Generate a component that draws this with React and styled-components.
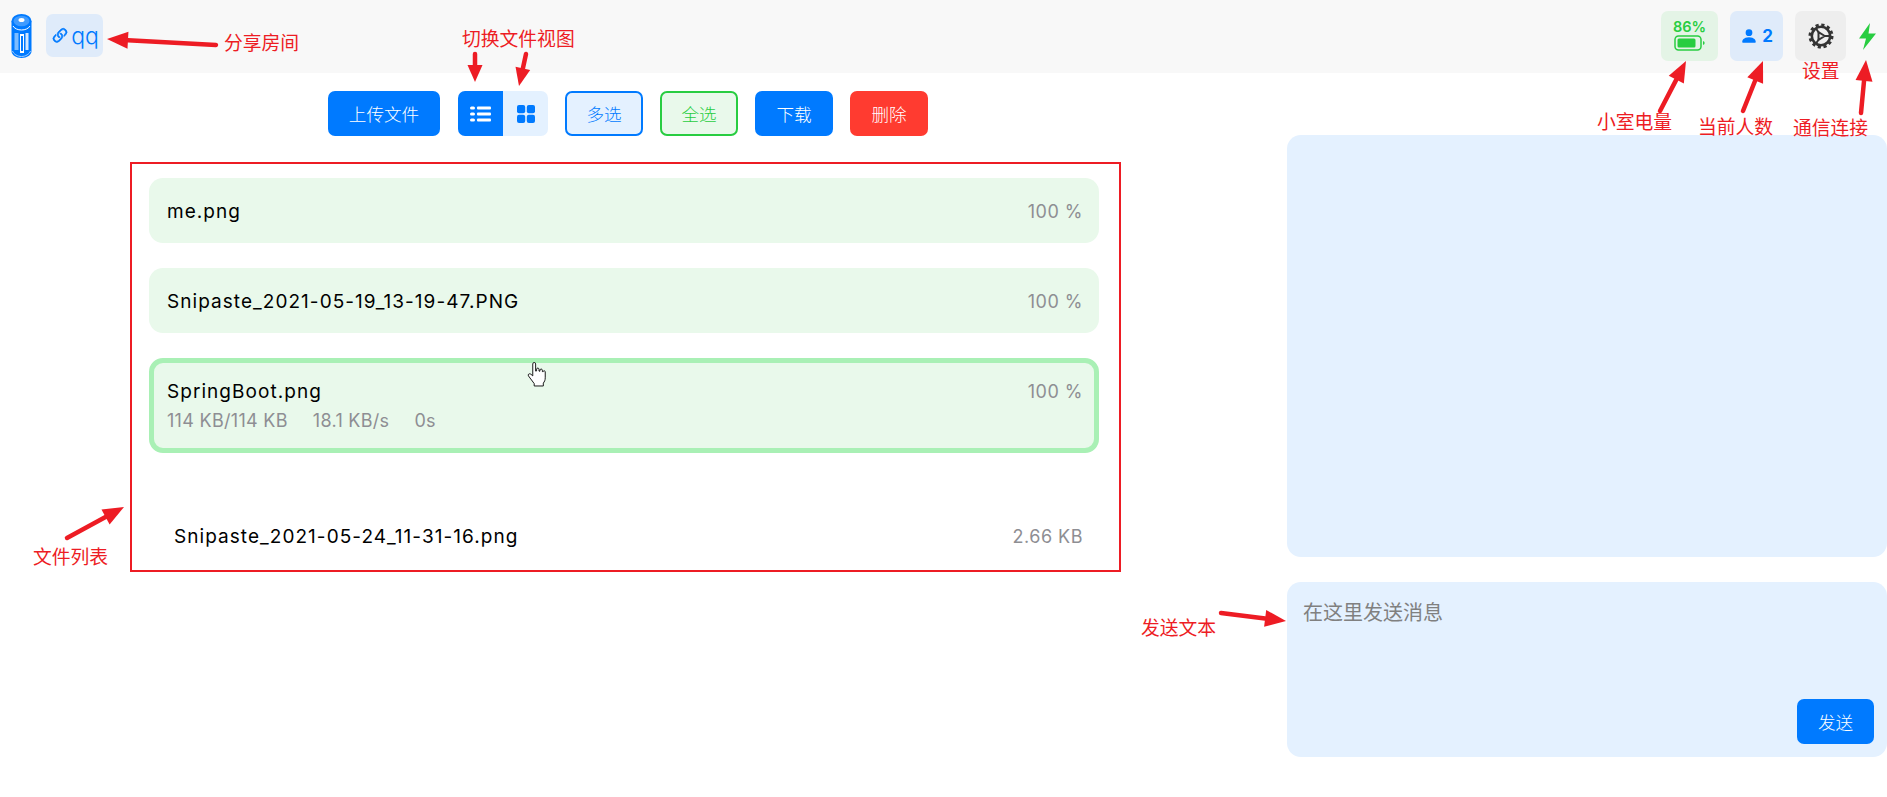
import React from "react";
import styled, { createGlobalStyle } from "styled-components";
import { BsLink45Deg, BsPersonFill } from "react-icons/bs";

const BLUE = "#007aff";
const LIGHT = "#e4f1ff";
const GREEN = "#28cd41";
const PALE_GREEN = "#e9f9eb";
const RED = "#ff3b30";
const GRAY = "#8e8e93";
const INK = "#ed1c24";
const LATIN = `Inter, "Noto Sans CJK SC", sans-serif`;
const CJK = `"Noto Sans CJK SC", "Noto Sans", sans-serif`;

const Global = createGlobalStyle`
  html, body { margin: 0; padding: 0; background: #fff; }
  body { font-family: ${CJK}; overflow: hidden; }
  * { box-sizing: border-box; }
`;

const Page = styled.div`
  position: relative;
  width: 1887px;
  height: 797px;
  overflow: hidden;
`;

const Header = styled.header`
  height: 73px;
  background: #f8f8f8;
  display: flex;
  align-items: flex-start;
  padding: 11px 10px 0 10px;
`;

const Logo = styled.svg`
  width: 23px;
  height: 46px;
  margin-top: 2px;
  flex: none;
`;

const RoomChip = styled.div`
  margin: 3px 0 0 13px;
  width: 57px;
  height: 43px;
  border-radius: 7px;
  background: #dfebfa;
  color: ${BLUE};
  display: flex;
  align-items: center;
  justify-content: center;
  gap: 1px;
  font-family: ${LATIN};
  font-size: 23px;
  font-weight: 300;
  svg { font-size: 20px; stroke: ${BLUE}; stroke-width: 0.5px; }
`;

const HeaderRight = styled.div`
  margin-left: auto;
  display: flex;
  align-items: flex-start;
  gap: 12px;
`;

const Status = styled.div`
  width: ${(p) => p.$w}px;
  height: 50px;
  border-radius: 7px;
  background: ${(p) => p.$bg};
  color: ${(p) => p.$fg};
  display: flex;
  flex-direction: ${(p) => (p.$column ? "column" : "row")};
  align-items: center;
  justify-content: center;
  gap: ${(p) => (p.$column ? 0 : 4)}px;
  padding-bottom: ${(p) => (p.$column ? 3 : 0)}px;
  font-family: ${LATIN};
  font-weight: 600;
`;

const Percent = styled.span`
  font-size: 14.5px;
  line-height: 17px;
`;

const Count = styled.span`
  font-size: 17px;
  font-weight: 700;
`;

const Bolt = styled.svg`
  width: 19px;
  height: 27px;
  margin-top: 12px;
`;

const Main = styled.main`
  display: flex;
  justify-content: space-between;
  align-items: flex-start;
`;

const LeftColumn = styled.section`
  margin-left: 149px;
  width: 950px;
  padding-top: 18px;
`;

const Toolbar = styled.div`
  display: flex;
  margin-left: 179px;
  gap: 17px;
`;

const Button = styled.button`
  height: 45px;
  width: ${(p) => p.$w || 78}px;
  border-radius: 7px;
  border: ${(p) => (p.$outline ? `2px solid ${p.$color}` : "none")};
  background: ${(p) => (p.$outline ? p.$tint : p.$color)};
  color: ${(p) => (p.$outline ? p.$color : "#fff")};
  font-family: ${CJK};
  font-size: 17.6px;
  font-weight: 300;
  padding: 0;
`;

const Toggle = styled.div`
  display: flex;
  width: 90px;
  height: 45px;
  border-radius: 7px;
  overflow: hidden;
  margin-left: 1px;
`;

const ToggleSide = styled.div`
  flex: 1;
  background: ${(p) => (p.$active ? BLUE : LIGHT)};
  display: flex;
  align-items: center;
  justify-content: center;
`;

const FileList = styled.div`
  margin-top: 42px;
  display: flex;
  flex-direction: column;
`;

const FileItem = styled.div`
  background: ${(p) => (p.$plain ? "transparent" : PALE_GREEN)};
  border-radius: 14px;
  border: ${(p) => (p.$active ? "5px solid #a9f0b5" : "none")};
  margin-bottom: ${(p) => p.$after || 0}px;
  height: ${(p) => (p.$active ? 95 : 65)}px;
  padding: ${(p) => (p.$active ? "17px 11px 0 13px" : p.$plain ? "0 16px 0 25px" : "2px 16px 0 18px")};
  display: flex;
  flex-direction: column;
  justify-content: ${(p) => (p.$active ? "flex-start" : "center")};
  font-family: ${LATIN};
`;

const FileRow = styled.div`
  display: flex;
  justify-content: space-between;
  align-items: center;
  height: 22px;
  font-size: 19px;
`;

const FileName = styled.span`
  color: #000;
  letter-spacing: 1.05px;
`;

const FileSize = styled.span`
  color: ${GRAY};
  font-size: 18px;
  letter-spacing: 0.5px;
`;

const Progress = styled.div`
  display: flex;
  gap: 25px;
  margin-top: 8px;
  color: ${GRAY};
  font-size: 18px;
  letter-spacing: 0.3px;
  line-height: 22px;
`;

const RightColumn = styled.aside`
  width: 600px;
  padding-top: 62px;
  display: flex;
  flex-direction: column;
  gap: 25px;
`;

const ChatBox = styled.div`
  height: 422px;
  background: ${LIGHT};
  border-radius: 14px;
`;

const Composer = styled.div`
  position: relative;
  height: 175px;
  background: ${LIGHT};
  border-radius: 14px;
  padding: 16px 13px 13px 16px;
  display: flex;
  flex-direction: column;
  align-items: flex-end;
`;

const MessageInput = styled.textarea`
  flex: 1;
  width: 100%;
  border: none;
  outline: none;
  resize: none;
  background: transparent;
  font-family: ${CJK};
  font-size: 20px;
  line-height: 28px;
  padding: 0;
  &::placeholder { color: #808080; opacity: 1; }
`;

const Overlay = styled.div`
  position: absolute;
  inset: 0;
  pointer-events: none;
`;

const RedFrame = styled.div`
  position: absolute;
  left: 130px;
  top: 162px;
  width: 991px;
  height: 410px;
  border: 2px solid ${INK};
`;

const Note = styled.span`
  position: absolute;
  left: ${(p) => p.$x}px;
  top: ${(p) => p.$y - 14}px;
  font-family: ${CJK};
  font-size: 18.8px;
  line-height: 26px;
  color: ${INK};
  white-space: nowrap;
`;

const Arrows = styled.svg`
  position: absolute;
  inset: 0;
  width: 1887px;
  height: 797px;
`;

const Pointer = styled.svg`
  position: absolute;
  left: 527px;
  top: 362px;
  width: 21px;
  height: 26px;
`;

function Arrow({ x1, y1, x2, y2, head = 21, width = 17, stroke = 4.5 }) {
  const dx = x2 - x1, dy = y2 - y1;
  const len = Math.hypot(dx, dy);
  const ux = dx / len, uy = dy / len;
  const bx = x2 - ux * head, by = y2 - uy * head;
  const nx = -uy * (width / 2), ny = ux * (width / 2);
  return (
    <g>
      <line x1={x1} y1={y1} x2={bx} y2={by} stroke={INK} strokeWidth={stroke} strokeLinecap="round" />
      <polygon points={`${x2},${y2} ${bx + nx},${by + ny} ${bx - nx},${by - ny}`} fill={INK} />
    </g>
  );
}

const ARROWS = [
  { x1: 216, y1: 45, x2: 107, y2: 39 },
  { x1: 475, y1: 54, x2: 475, y2: 82, head: 17, width: 15 },
  { x1: 526, y1: 54, x2: 519, y2: 86, head: 18, width: 15 },
  { x1: 1660, y1: 111, x2: 1686, y2: 61 },
  { x1: 1743, y1: 111, x2: 1763, y2: 61 },
  { x1: 1861, y1: 113, x2: 1866, y2: 60 },
  { x1: 67, y1: 538, x2: 124, y2: 507 },
  { x1: 1221, y1: 613, x2: 1286, y2: 621 },
];

const NOTES = [
  ["分享房间", 224, 43],
  ["切换文件视图", 462, 39],
  ["小室电量", 1597, 122],
  ["当前人数", 1698, 127],
  ["设置", 1802, 71],
  ["通信连接", 1793, 128],
  ["文件列表", 33, 557],
  ["发送文本", 1141, 628],
];

function LogoMark() {
  return (
    <Logo viewBox="0 0 22 46">
      <path d="M1 8v30c0 4 4.500 7 10 7s10-3 10-7V8z" fill={BLUE} />
      <path d="M2.500 13c1.500 2.600 4.800 4 8.500 4s7-1.400 8.500-4" fill="none" stroke="#fff" strokeWidth="1" />
      <ellipse cx="11" cy="8" rx="10" ry="7" fill={BLUE} />
      <ellipse cx="11" cy="8" rx="8" ry="5.200" fill="#3f9bff" />
      <ellipse cx="11" cy="7" rx="3" ry="2" fill="#fff" />
      <rect x="4" y="20" width="4" height="17" fill="#7dbcff" />
      <rect x="9.500" y="21" width="4" height="19" fill="#fff" />
      <rect x="10.500" y="23" width="2" height="15" fill={BLUE} />
      <rect x="15" y="20" width="3" height="17" fill="#cfe6ff" />
      <path d="M2 38c1 3 5 5.500 9 5.500s8-2.500 9-5.500" fill="none" stroke="#9fceff" strokeWidth="1" />
    </Logo>
  );
}

function BatteryIcon() {
  return (
    <svg width="31" height="16" viewBox="0 0 31 16">
      <rect x="1" y="1" width="26" height="14" rx="3.500" fill="none" stroke={GREEN} strokeWidth="1.500" />
      <rect x="3.500" y="3.500" width="18" height="9" rx="1.500" fill={GREEN} />
      <path d="M29 6l1.500 1v2L29 10z" fill={GREEN} />
    </svg>
  );
}

function GearIcon() {
  return (
    <svg width="26" height="26" viewBox="0 0 26 26" fill="none" stroke="#333">
      <circle cx="13" cy="13" r="9.200" strokeWidth="2.600" />
      <circle cx="13" cy="13" r="11.200" strokeWidth="2.600" strokeDasharray="3.200 2.660" />
      <path d="M10.500 9.200L16.800 13l-6.300 3.800z" strokeWidth="2" strokeLinejoin="round" />
      <path d="M16.800 13H21M10.500 9.200L8 5.500M10.500 16.800L8 20.500" strokeWidth="2" />
    </svg>
  );
}

function ListIcon() {
  return (
    <svg width="21" height="16" viewBox="0 0 21 16" fill="#fff">
      <rect x="0" y="0.500" width="5" height="3" rx="1.500" />
      <rect x="7" y="0.500" width="14" height="3" rx="1" />
      <rect x="0" y="6.500" width="5" height="3" rx="1.500" />
      <rect x="7" y="6.500" width="14" height="3" rx="1" />
      <rect x="0" y="12.500" width="5" height="3" rx="1.500" />
      <rect x="7" y="12.500" width="14" height="3" rx="1" />
    </svg>
  );
}

function GridIcon() {
  return (
    <svg width="18" height="18" viewBox="0 0 18 18" fill={BLUE}>
      <rect x="0" y="0" width="8.200" height="8.200" rx="2" />
      <rect x="9.800" y="0" width="8.200" height="8.200" rx="2" />
      <rect x="0" y="9.800" width="8.200" height="8.200" rx="2" />
      <rect x="9.800" y="9.800" width="8.200" height="8.200" rx="2" />
    </svg>
  );
}

export default function App() {
  return (
    <Page>
      <Global />
      <Header>
        <LogoMark />
        <RoomChip><BsLink45Deg />qq</RoomChip>
        <HeaderRight>
          <Status $w={57} $bg="#e4f4e6" $fg={GREEN} $column>
            <Percent>86%</Percent>
            <BatteryIcon />
          </Status>
          <Status $w={53} $bg="#dfebfa" $fg={BLUE}>
            <BsPersonFill size={18} />
            <Count>2</Count>
          </Status>
          <Status $w={51} $bg="#eeeeee" $fg="#333"><GearIcon /></Status>
          <Bolt viewBox="0 0 19 27">
            <path d="M12 0L1 15.500h7L5 27 18 10.500h-7.500z" fill={GREEN} />
          </Bolt>
        </HeaderRight>
      </Header>
      <Main>
        <LeftColumn>
          <Toolbar>
            <Button $w={112} $color={BLUE}>上传文件</Button>
            <Toggle>
              <ToggleSide $active><ListIcon /></ToggleSide>
              <ToggleSide><GridIcon /></ToggleSide>
            </Toggle>
            <Button $outline $color={BLUE} $tint={LIGHT}>多选</Button>
            <Button $outline $color={GREEN} $tint={PALE_GREEN}>全选</Button>
            <Button $color={BLUE}>下载</Button>
            <Button $color={RED}>删除</Button>
          </Toolbar>
          <FileList>
            <FileItem $after={25}>
              <FileRow><FileName>me.png</FileName><FileSize>100 %</FileSize></FileRow>
            </FileItem>
            <FileItem $after={25}>
              <FileRow><FileName>Snipaste_2021-05-19_13-19-47.PNG</FileName><FileSize>100 %</FileSize></FileRow>
            </FileItem>
            <FileItem $active $after={51}>
              <FileRow><FileName>SpringBoot.png</FileName><FileSize>100 %</FileSize></FileRow>
              <Progress><span>114 KB/114 KB</span><span>18.1 KB/s</span><span>0s</span></Progress>
            </FileItem>
            <FileItem $plain>
              <FileRow><FileName>Snipaste_2021-05-24_11-31-16.png</FileName><FileSize>2.66 KB</FileSize></FileRow>
            </FileItem>
          </FileList>
        </LeftColumn>
        <RightColumn>
          <ChatBox />
          <Composer>
            <MessageInput placeholder="在这里发送消息" />
            <Button $color={BLUE} $w={77}>发送</Button>
          </Composer>
        </RightColumn>
      </Main>
      <Overlay>
        <RedFrame />
        <Arrows viewBox="0 0 1887 797">
          {ARROWS.map((a, i) => <Arrow key={i} {...a} />)}
        </Arrows>
        {NOTES.map(([text, x, y]) => <Note key={text} $x={x} $y={y}>{text}</Note>)}
        <Pointer viewBox="0 0 21 26">
          <path d="M6 2.500c0-2 3-2 3 0V10l1-.2V8c0-1.500 2.500-1.500 2.500 0v2l1 .1V9c0-1.500 2.500-1.500 2.500 0v1.500l.8.1c0-1.300 2.200-1.300 2.200.2v6.200c0 2.500-.8 4-2 5.500v3H7.500v-2.500L1.500 15c-1-1.500 1-3 2.500-1.800L6 15z" fill="#fff" stroke="#111" strokeWidth="1" strokeLinejoin="round" transform="translate(0 -.5) scale(.96)" />
        </Pointer>
      </Overlay>
    </Page>
  );
}
